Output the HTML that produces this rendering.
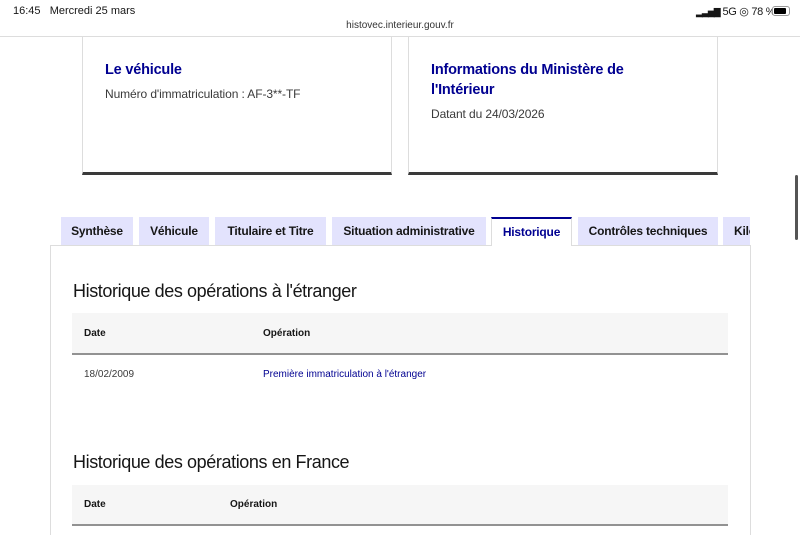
<!DOCTYPE html>
<html><head><meta charset="utf-8"><style>
*{margin:0;padding:0;box-sizing:border-box}
body{width:800px;height:525px;overflow:hidden;background:#fff;font-family:"Liberation Sans",sans-serif;position:relative;color:#161616}
.a{position:absolute;white-space:nowrap}
.card{position:absolute;top:37px;width:310px;height:138px;border:1px solid #ddd;border-top:none;border-bottom:3px solid #3a3a3a;background:#fff}
.ct{position:absolute;left:22px;color:#000091;font-weight:bold;font-size:14.5px;line-height:20px;letter-spacing:-0.2px}
.cs{position:absolute;left:22px;color:#3a3a3a;font-size:12px;letter-spacing:-0.1px}
.tab{position:absolute;top:217px;height:28px;background:#e3e3fd;font-size:12px;font-weight:bold;color:#161616;text-align:center;line-height:29px;letter-spacing:-0.2px}
.h{position:absolute;left:73px;font-size:18px;letter-spacing:-0.4px;color:#161616}
.th{position:absolute;left:72px;width:656px;background:#f6f6f6;border-bottom:2px solid #929292}
.sm{position:absolute;font-size:10px;color:#161616}
</style></head><body>
<div class="a" style="left:13px;top:5px;font-size:11px">16:45&nbsp;&nbsp; Mercredi 25 mars</div>
<div class="a" style="left:696px;top:5px;font-size:11px;letter-spacing:-0.3px"><span style="font-size:9px;letter-spacing:-1px">▂▃▅▇</span> 5G ◎ 78 %</div>
<div class="a" style="left:772px;top:6px;width:18px;height:10px;border-radius:3px;background:#fff;border:1px solid #999;padding:1px"><div style="width:12px;height:6px;background:#000;border-radius:1px"></div></div>
<div class="a" style="left:0;top:20px;width:800px;text-align:center;font-size:10px;color:#333">histovec.interieur.gouv.fr</div>
<div class="a" style="left:0;top:36px;width:800px;height:1px;background:#ddd"></div>

<div class="card" style="left:82px"><div class="ct" style="top:23px">Le véhicule</div><div class="cs" style="top:50px">Numéro d'immatriculation : AF-3**-TF</div></div>
<div class="card" style="left:408px"><div class="ct" style="top:23px">Informations du Ministère de<br>l'Intérieur</div><div class="cs" style="top:70px">Datant du 24/03/2026</div></div>

<div class="a" style="left:795px;top:175px;width:3px;height:65px;background:#555;border-radius:2px"></div>

<div class="a" style="left:50px;top:245px;width:701px;height:290px;border:1px solid #ddd;border-bottom:none"></div>
<div class="tab" style="left:61px;width:72px">Synthèse</div>
<div class="tab" style="left:139px;width:70px">Véhicule</div>
<div class="tab" style="left:215px;width:111px">Titulaire et Titre</div>
<div class="tab" style="left:332px;width:154px">Situation administrative</div>
<div class="tab" style="left:491px;width:81px;background:#fff;border:1px solid #ddd;border-top:2px solid #000091;border-bottom:none;height:29px;color:#000091;line-height:26px">Historique</div>
<div class="tab" style="left:578px;width:140px">Contrôles techniques</div>
<div class="tab" style="left:723px;width:27px;overflow:hidden;text-align:left;padding-left:11px">Kilométrage</div>

<div class="h" style="top:281px">Historique des opérations à l'étranger</div>
<div class="th" style="top:313px;height:42px"></div>
<div class="sm" style="left:84px;top:328px;font-weight:bold">Date</div>
<div class="sm" style="left:263px;top:328px;font-weight:bold">Opération</div>
<div class="sm" style="left:84px;top:369px;color:#3a3a3a">18/02/2009</div>
<div class="sm" style="left:263px;top:369px;color:#000091">Première immatriculation à l'étranger</div>

<div class="h" style="top:452px">Historique des opérations en France</div>
<div class="th" style="top:485px;height:41px"></div>
<div class="sm" style="left:84px;top:499px;font-weight:bold">Date</div>
<div class="sm" style="left:230px;top:499px;font-weight:bold">Opération</div>
</body></html>
